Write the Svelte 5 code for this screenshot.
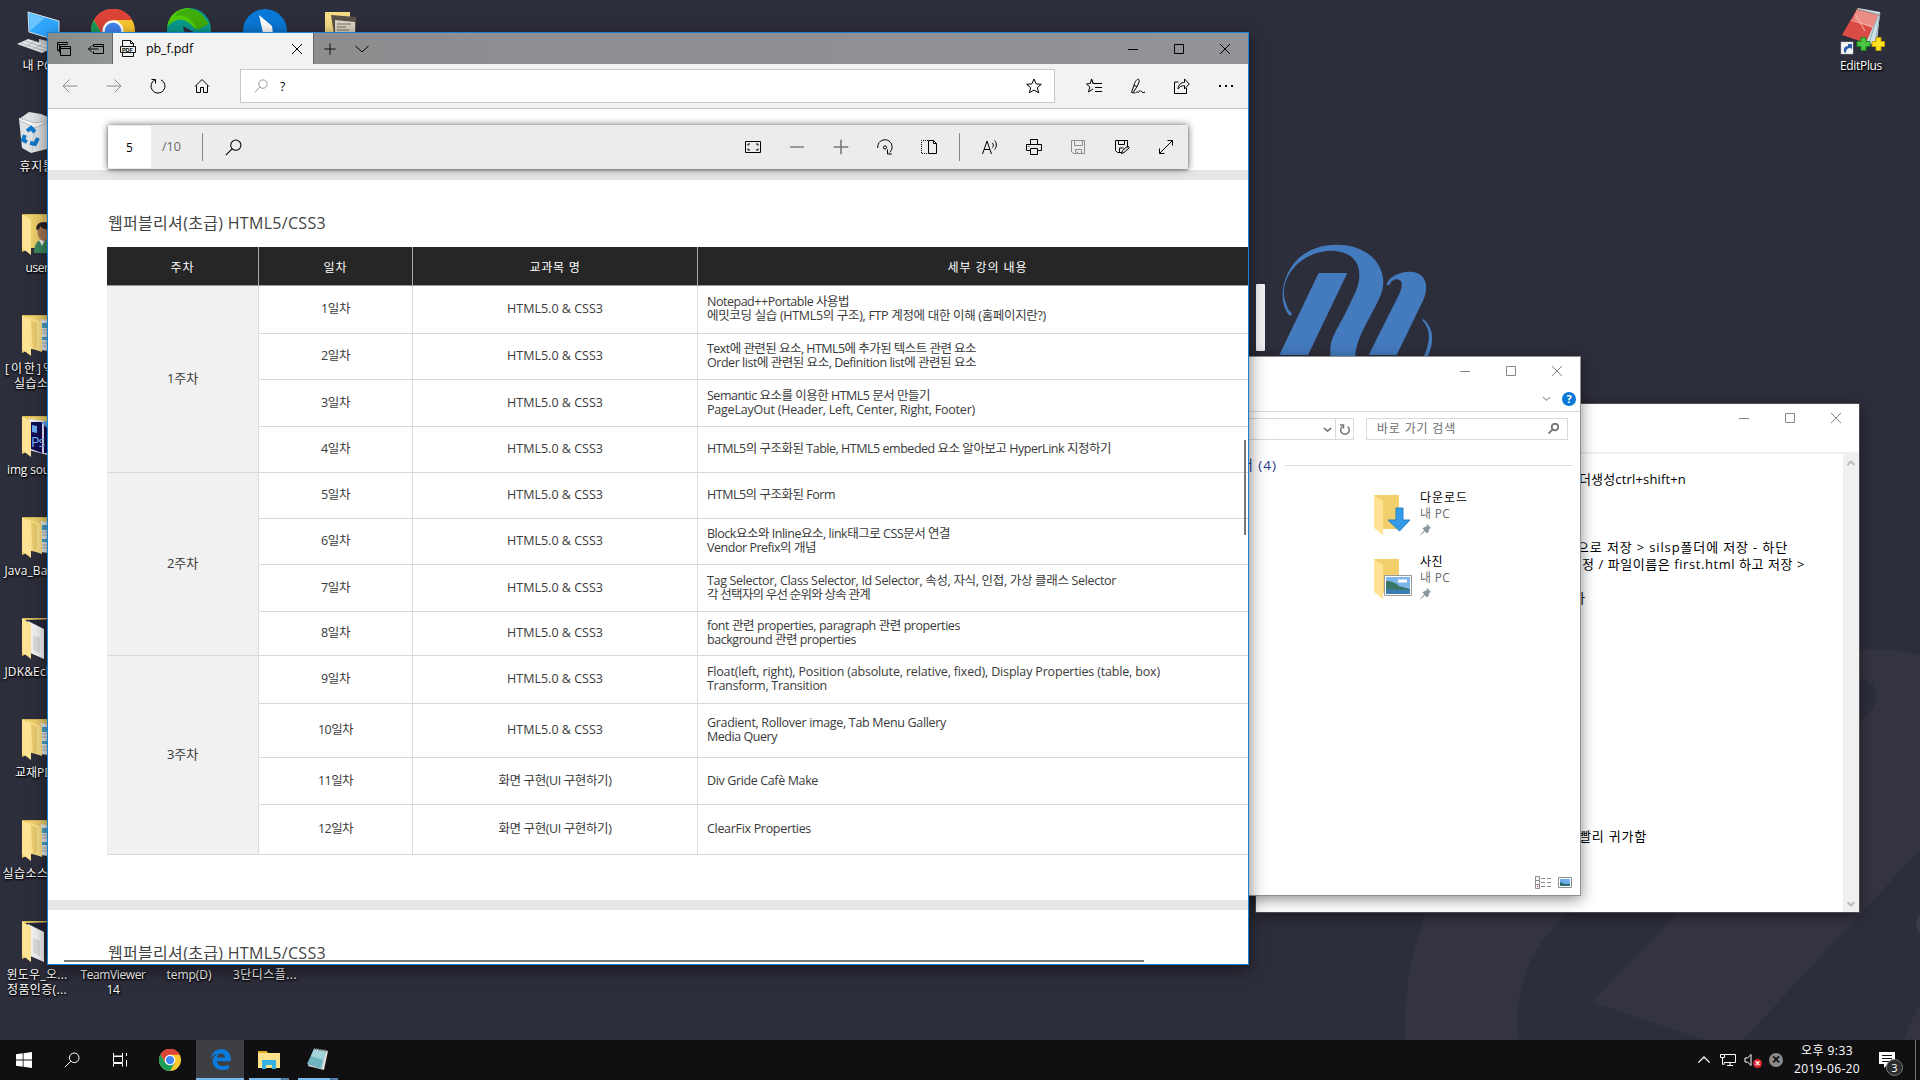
<script lang="ts">
  // Spreads a run of text over a fixed advance width by adjusting its tracking.
  function fit(node: HTMLElement, width: number) {
    const count = [...(node.textContent ?? '')].length;
    const natural = node.getBoundingClientRect().width;
    if (width && count) node.style.letterSpacing = `${(width - natural) / count}px`;
  }

  const glyphs: Record<string, string> = {
    tabs: 'M1.5 9.5v-8h10v1M1.5 3.5h10M3.5 11.5v-8M4.5 5.5h10v9h-10zM4.5 7.5h10M1.5 9.5h2',
    setAside: 'M5.5 5.5v-2h10v9h-10v-2M5.500 5.500h10M.5 8h10M4 4.500L.5 8 4 11.500',
    close: 'M3 3l10 10M13 3L3 13',
    plus: 'M8 1.500v13M1.500 8h13',
    minus: 'M1 8h14',
    chevron: 'M1.500 5L8 11l6.500-6',
    min: 'M3 8.500h10',
    max: 'M3.500 3.500h9v9h-9z',
    back: 'M1 8h14.500M7.500 1.500L1 8l6.500 6.500',
    forward: 'M.5 8H15M8.500 1.500L15 8l-6.500 6.500',
    refresh: 'M5 1.800A7 7 0 1 0 11 1.800M1.500 1.500h4v4',
    home: 'M1 8.500L8 1.500l7 7M2.500 7.500v7h4v-5h3v5h4v-7',
    search: 'M15 5.800a4.800 4.800 0 1 1-9.600 0 4.800 4.800 0 0 1 9.600 0M6.700 9.300L.8 15.200',
    star: 'M8 1l2.100 4.900 5.200.4-4 3.400 1.300 5.100L8 12l-4.600 2.800 1.300-5.100-4-3.400 5.200-.4z',
    favorites: 'M9 5.500L7 5.300 5.500 1 4.300 5.500.5 6l3.300 3-1.300 5L7 11M7.800 5.500H16M9 9.500h7M9 13.500h7M5.500 1L7 5.500',
    pen: 'M5 15l-3.500-.5L4 7C5 3.500 7 .8 8.500 1.300s.5 3.700-1.500 7.200L3.500 14M4 7.500l3 1M8 15c1.500-3 3-2.500 3.500-1.500s2 1.500 3.500.5M5.500 14.800l2-1.300',
    share: 'M4.500 4h-4v11.500h12V10M4 11c.5-4.500 3-6.500 6.500-6.500V1L15.300 6l-4.800 5V7.700C7.500 7.700 5.500 8.500 4 11z',
    fitPage: 'M.5 2.500h15v11H.5zM3 6.500V5h2M11 5h2v1.500M3 9.500V11h2M11 11h2V9.500',
    rotate: 'M.8 9A7.200 7.200 0 1 1 12.500 13.500M10.500 10.500v4.500h4.500M9.600 8.500a1.600 1.600 0 1 1-3.200 0 1.600 1.600 0 0 1 3.200 0',
    read: 'M.5 15L5 2l4.500 13M2 10.500h6M10.500 4c1 1.500 1 3 0 4.500M12.700 1.500c2.200 2.800 2.200 6 0 9',
    print: 'M4.500 5.500v-5h7v5M4.500 11.500h-4v-6h15v6h-4M4.500 9.500h7v6h-7zM2.500 7.500h1',
    save: 'M1.500 1.500h13v13h-11l-2-2zM4.500 1.500v5h8v-5M5.500 14.500v-4h6v4M7.500 14.500v-2',
    savePen: 'M8 13.500H3.500l-2-2v-10h12v7M4.500 1.500v4h6v-4M5.500 13v-4h4M7.500 14.500l1-3 5.500-4.500 1.300 1.800-5.300 4.700z',
    expand: 'M1.500 14.500l13-13M9.500 1.500h5v5M1.500 9.500v5h5',
    up: 'M1.500 11L8 4.500l6.500 6.500',
    taskView: 'M1.500 1v3h9V1M1.500 14.500v-3h9v3M1.500 4.500h9v6h-9zM14.500 1v3M14.500 8v6.500',
    monitor: 'M4.500 2.500h11v8H4M7 13.500h6M10 11v2.500M.5 2.500h4v3h-4zM2.500 6v6.500M2 12h3',
    speaker: 'M1 6h2.500L7 2.500v11L3.500 10H1z',
  };

  const schedule = [
    ['1일차', 0, [['Notepad++Portable 사용법', 142], ['에밋코딩 실습 (HTML5의 구조), FTP 계정에 대한 이해 (홈페이지란?)', 339]], 48],
    ['2일차', 0, [['Text에 관련된 요소, HTML5에 추가된 텍스트 관련 요소', 269], ['Order list에 관련된 요소, Definition list에 관련된 요소', 269]], 46],
    ['3일차', 0, [['Semantic 요소를 이용한 HTML5 문서 만들기', 223], ['PageLayOut (Header, Left, Center, Right, Footer)', 268]], 47],
    ['4일차', 0, [['HTML5의 구조화된 Table, HTML5 embeded 요소 알아보고 HyperLink 지정하기', 404]], 46],
    ['5일차', 0, [['HTML5의 구조화된 Form', 128]], 46],
    ['6일차', 0, [['Block요소와 Inline요소, link태그로 CSS문서 연결', 243], ['Vendor Prefix의 개념', 109]], 46],
    ['7일차', 0, [['Tag Selector, Class Selector, Id Selector, 속성, 자식, 인접, 가상 클래스 Selector', 409], ['각 선택자의 우선 순위와 상속 관계', 163]], 47],
    ['8일차', 0, [['font 관련 properties, paragraph 관련 properties', 253], ['background 관련 properties', 149]], 44],
    ['9일차', 0, [['Float(left, right), Position (absolute, relative, fixed), Display Properties (table, box)', 453], ['Transform, Transition', 120]], 48],
    ['10일차', 0, [['Gradient, Rollover image, Tab Menu Gallery', 239], ['Media Query', 70]], 54],
    ['11일차', 1, [['Div Gride Cafè Make', 111]], 47],
    ['12일차', 1, [['ClearFix Properties', 104]], 50],
  ] as [string, number, [string, number][], number][];
  const subjects: [string, number][] = [['HTML5.0 & CSS3', 96], ['화면 구현(UI 구현하기)', 113]];
  const rowTemplate = ['39px', ...schedule.map((r) => r[3] + 'px')].join(' ');
  const weeks = [['1주차', 2, 4], ['2주차', 6, 4], ['3주차', 10, 4]] as [string, number, number][];
  const headers: [string, number][] = [['주차', 24], ['일차', 24], ['교과목 명', 51], ['세부 강의 내용', 80]];

  const desktop: { col: number; row: number; icon: string; label: [string, number][] }[] = [
    { col: 1, row: 1, icon: 'pc', label: [['내 PC', 29]] },
    { col: 1, row: 2, icon: 'bin', label: [['휴지통', 35]] },
    { col: 1, row: 3, icon: 'user', label: [['user', 23]] },
    { col: 1, row: 4, icon: 'docs', label: [['[이한]엑셀', 64], ['실습소스', 46]] },
    { col: 1, row: 5, icon: 'ps', label: [['img source', 60]] },
    { col: 1, row: 6, icon: 'docs', label: [['Java_Back...', 65]] },
    { col: 1, row: 7, icon: 'white', label: [['JDK&Eclip...', 65]] },
    { col: 1, row: 8, icon: 'docs', label: [['교재PDF', 44]] },
    { col: 1, row: 9, icon: 'docs', label: [['실습소스코드', 69]] },
    { col: 1, row: 10, icon: 'white', label: [['윈도우_오...', 61], ['정품인증(...', 60]] },
    { col: 2, row: 1, icon: 'chrome', label: [] },
    { col: 3, row: 1, icon: 'green', label: [] },
    { col: 4, row: 1, icon: 'blue', label: [] },
    { col: 5, row: 1, icon: 'book', label: [] },
    { col: 2, row: 10, icon: '', label: [['TeamViewer', 65], ['14', 13]] },
    { col: 3, row: 10, icon: '', label: [['temp(D)', 45]] },
    { col: 4, row: 10, icon: '', label: [['3단디스플...', 64]] },
  ];

  // Notes are laid out on a 17px line pitch; the indent is the start of each run.
  const notes: [number, number, string, number][] = [
    [2, 19, '더생성ctrl+shift+n', 107],
    [6, 17, '으로 저장 > silsp폴더에 저장 - 하단', 211],
    [7, 22, '정 / 파일이름은 first.html 하고 저장 >', 223],
    [9, 13, '다', 12],
    [23, 19, '빨리 귀가함', 68],
  ];
</script>

{#snippet glyph(name: string, size = 16, cls = '')}
  <svg class="glyph {cls}" width={size} height={size} viewBox="0 0 16 16"><path d={glyphs[name]} /></svg>
{/snippet}

{#snippet chrome(size: number)}
  <svg width={size} height={size} viewBox="0 0 24 24">
    <circle cx="12" cy="12" r="12" fill="#fbc82f" />
    <path d="M12 12L1.600 6A12 12 0 0 1 22.400 6L12 6z" fill="#dc4437" />
    <path d="M12 6h10.500A12 12 0 0 0 1.600 6L6.800 15z" fill="#dc4437" />
    <path d="M1.600 6A12 12 0 0 0 12 24l5.200-9H6.800z" fill="#1b9e5a" />
    <circle cx="12" cy="12" r="5.800" fill="#fff" /><circle cx="12" cy="12" r="4.500" fill="#4285f4" />
  </svg>
{/snippet}

{#snippet folder(kind: string)}
  <svg width="48" height="48" viewBox="0 0 48 48">
    <path d="M9 6h26v34H18L9 44z" fill="#efcf6c" />
    {#if kind === 'user'}
      <path d="M21 45q0-13 10-14 9 1 9 14z" fill="#3b8860" /><path d="M26 32l3 6 3-6z" fill="#eee" />
      <ellipse cx="31" cy="24" rx="6.500" ry="9" fill="#a97754" />
      <path d="M23.500 22q-1-8 7.500-8 8 0 8 8-9 0-12-4 0 4-3.500 4" fill="#2b2525" />
    {:else if kind === 'docs'}
      <path d="M28 10l14 3v30l-14-2z" fill="#e9eef0" />
      <path d="M29 14h8v5h-8zM29 28h8v3h-8z" fill="#4da5cc" /><path d="M29 21h9M29 24h9M29 34h9M29 37h9" stroke="#a6b6bd" />
      <path d="M14 8l15 5v30l-3-1-12-4z" fill="#fbe08a" /><path d="M18 11l6 3v24l-4 3z" fill="#eacb6c" />
    {:else if kind === 'ps'}
      <path d="M16 9l22 3v34l-22-6z" fill="#eef" /><path d="M18 12h11v31l-11-4zM31 12h10v31H31z" fill="#100c54" />
      <path d="M19 15l5 1v7l-5-1zM28 12l6 6v-7z" fill="#67aaf0" />
      <text x="18" y="37" class="ps">Ps</text>
    {:else if kind === 'white'}
      <path d="M12 8l30-1v34H30z" fill="#25253a" /><path d="M15 9l16 8v30l-16-7z" fill="#f3f3f3" />
      <path d="M20 23l7 3v15l-7-3z" fill="#dcdcdc" />
    {/if}
    <path d="M9 6l9 6v35l-9-7z" fill="#ffe495" />
    <path d="M9 6.500h26" stroke="#d8b95a" />
  </svg>
{/snippet}

{#snippet desktopIcon(kind: string)}
  {#if kind === 'pc'}
    <svg width="48" height="48" viewBox="0 0 48 48">
      <path d="M15 6l31 9v20l-30-9z" fill="#2fa8ff" stroke="#dfe9ef" stroke-width="1" /><path d="M16 7l16 5-15 13z" fill="#6ac4ff" />
      <path d="M26 33l12 3v7l-12-4z" fill="#ccc" /><path d="M4 38l11-5 26 8-12 6z" fill="#e3e6e8" /><path d="M8 37l24 8M12 35l24 8M12 41l10-6M20 43l10-5" stroke="#9fa6aa" stroke-width=".7" />
    </svg>
  {:else if kind === 'bin'}
    <svg width="48" height="48" viewBox="0 0 48 48">
      <path d="M6 12l10-7 12 2 12 5-6 30-16 4-9-5z" fill="#dfe3e6" /><path d="M6 11l16 5 18-3-18 8-16-8" fill="#f8f8f8" stroke="#a9b0b5" stroke-width=".8" /><path d="M22 19l-3 25" stroke="#c0c7cb" />
      <path d="M14 24l4-3 4 4M12 28l-2 5 4 2M17 36l5 1 3-6" fill="none" stroke="#1478c9" stroke-width="4" />
    </svg>
  {:else if kind === 'chrome'}
    <span class="round">{@render chrome(44)}</span>
  {:else if kind === 'green'}
    <svg width="48" height="48" viewBox="0 0 48 48"><circle cx="24" cy="24" r="22" fill="#099c8d" /><path d="M2 21Q5 3 24 2l20 15-14 6Q16 5 2 21z" fill="#51ca06" /><path d="M10 10q14-3 23 14l10-6Q36 2 22 3q-8 1-12 7z" fill="#3fae0a" /><path d="M18 20l14 8-10 9z" fill="#2d2e3b" /></svg>
  {:else if kind === 'blue'}
    <svg width="48" height="48" viewBox="0 0 48 48"><circle cx="24" cy="25" r="22" fill="#0a78d6" /><path d="M18 9l13 11 1 8 8 5-27-4 9-2z" fill="#fff" /></svg>
  {:else if kind === 'book'}
    <svg width="48" height="48" viewBox="0 0 48 48"><path d="M8 6h25v30H8z" fill="#f5dc86" /><path d="M14 9l25 2v30H19z" fill="#5a5248" /><path d="M18 14l20 2v25H18z" fill="#dcd5c5" /><path d="M20 18h14M20 21h9M20 24h12" stroke="#7b7469" /></svg>
  {:else if kind}
    {@render folder(kind)}
  {:else}
    <span class="noicon"></span>
  {/if}
{/snippet}

{#snippet captions()}
  <div class="captions">
    <span>{@render glyph('min')}</span><span>{@render glyph('max')}</span><span>{@render glyph('close')}</span>
  </div>
{/snippet}

{#snippet pin()}
  <svg class="pin" width="12" height="12" viewBox="0 0 12 12"><path d="M7 0l4 4-1.500.5L8.500 8 7 9.500 4.800 7.300.5 11.500 0 11l4.200-4.800L2.500 4.500 4 3.200l2.500-.7z" fill="#8c979e" /></svg>
{/snippet}

<div class="desktop">
  <svg class="wallpaper" width="1920" height="1040" viewBox="0 0 1920 1040">
    <path d="M1860 650Q1890 648 1920 655V850L1743 1040H1704L1592 1002 1680 910 1860 800V722Q1884 702 1873 685 1868 679 1860 678z" fill="#333440" />
    <path d="M1568 913Q1510 965 1518 1040H1405Q1403 970 1426 913z" fill="#333440" />
    <path d="M1920 1003L1903 1040H1920z" fill="#333440" />
    <path d="M1917 921q-2 8 3 13v-20z" fill="#3c3d49" />
    <rect x="1256" y="284" width="9" height="67" rx="1" fill="#f4f4f6" />
    <g transform="translate(1240 220) scale(.3333)" fill="#447bbf">
      <path d="M150 288C100 240 130 75 290 74C380 74 432 130 430 190C430 245 345 340 346 412L272 412C265 350 290 340 335 240C370 180 375 100 280 92C180 90 110 180 138 250Q144 274 157 281Z" />
      <path d="M236 159H322L204 405H118z" />
      <path d="M440 195C446 165 490 154 510 155C560 157 568 200 550 240L470 405H386L478 222C492 192 485 178 470 178C455 180 450 190 448 196Z" />
      <path d="M548 296C585 325 582 370 562 412H550C570 370 575 330 548 302z" />
    </g>
  </svg>

  <div class="icons">
    {#each desktop as item}
      <div class="cell" style:grid-column={item.col} style:grid-row={item.row}>
        {@render desktopIcon(item.icon)}
        <div class="label">
          {#each item.label as [text, w]}<span use:fit={w}>{text}</span>{/each}
        </div>
      </div>
    {/each}
  </div>

  <div class="editplus">
    <svg width="48" height="50" viewBox="0 0 48 50">
      <path d="M21 3l22 4-3 30-12 4z" fill="#cfe2ea" /><path d="M43 8l-5 31M41 10L32 38" stroke="#8fa9b5" />
      <path d="M20 4l21 6-12 28L5 30z" fill="#dc4c46" /><path d="M20 4l21 6-6 13-19-9z" fill="#ec8d84" /><path d="M14 15l22 7M18 9l10 17" stroke="#f6b8ae" stroke-width="1" /><path d="M20 4l22 6" stroke="#8f7f7f" stroke-width="2" stroke-dasharray="1 1" />
      <rect x="4" y="37" width="12" height="12" fill="#f4f4f4" stroke="#bbb" stroke-width=".5" /><path d="M7 47q-1-6 4-6v-2h4v5l-2-1q-4 0-4 5z" fill="#2a5da8" />
      <path d="M24 32.500h5v4h4v5h-4v4h-5v-4h-4v-5h4z" fill="#4fc443" stroke="#148a1a" /><path d="M39 32.500h5v4h3.500v5H44v4h-5v-4h-4v-5h4z" fill="#ffe11f" stroke="#c79a08" />
    </svg>
    <div class="label"><span use:fit={42}>EditPlus</span></div>
  </div>

  <section class="window notepad">
    <header>{@render captions()}</header>
    <div class="notebody">
      <div class="notetext">
        {#each notes as [line, x, text, w]}
          <p style:grid-row={line} style:margin-left="{x}px"><span use:fit={w}>{text}</span></p>
        {/each}
      </div>
      <div class="scroll">
        <svg width="8" height="6" viewBox="0 0 8 6"><path d="M.5 5L4 1.500 7.500 5" /></svg>
        <svg width="8" height="6" viewBox="0 0 8 6"><path d="M.5 1L4 4.500 7.500 1" /></svg>
      </div>
    </div>
  </section>

  <section class="window explorer">
    <header>{@render captions()}</header>
    <div class="ribbon">
      {@render glyph('chevron', 9, 'thick')}
      <span class="help">?</span>
    </div>
    <div class="pathrow">
      <div class="path"><span>{@render glyph('chevron', 9, 'heavy')}</span><span class="reload"><svg width="12" height="13" viewBox="0 0 12 13"><path d="M3.500 3.500A4.300 4.300 0 1 0 8.500 3.500M1 2h3.500v3.500" /></svg></span></div>
      <div class="find"><span use:fit={79}>바로 가기 검색</span>{@render glyph('search', 11, 'heavy')}</div>
    </div>
    <div class="group"><span use:fit={50}>폴더 (4)</span><i></i></div>
    <div class="places">
      <div class="place">
        <svg width="40" height="44" viewBox="0 0 40 44"><path d="M0 2h25v34H8z" fill="#f1cf6b" /><path d="M0 2l9 6v34l-9-7z" fill="#ffe294" /><path d="M22 15h7v12h7L25.500 38 14 27h8z" fill="#359be8" stroke="#2480ca" /></svg>
        <div><b use:fit={48}>다운로드</b><span use:fit={30}>내 PC</span>{@render pin()}</div>
      </div>
      <div class="place">
        <svg width="40" height="44" viewBox="0 0 40 44"><path d="M0 2h25v34H8z" fill="#f1cf6b" /><path d="M0 2l9 6v34l-9-7z" fill="#ffe294" /><path d="M10.500 18.500h27v20h-27z" fill="#fff" stroke="#9a9a9a" /><path d="M12 20h24v17H12z" fill="#7eb5ec" /><path d="M12 24q8 0 13 5l11 3v5H12z" fill="#397764" /><path d="M12 32l24 1v4H12z" fill="#3a7dae" /><path d="M24 24h9" stroke="#fff" stroke-width="3" /></svg>
        <div><b use:fit={23}>사진</b><span use:fit={30}>내 PC</span>{@render pin()}</div>
      </div>
    </div>
    <footer>
      <svg width="17" height="14" viewBox="0 0 17 14"><path d="M.5.500h4v12h-4zM.5 4.500h4M.5 8.500h4M6 2.500h4M12 2.500h4M6 6.500h4M12 6.500h4M6 10.500h4M12 10.500h4" fill="none" stroke="#8b8b8b" /><path d="M2 10h1v1H2z" fill="#c22" /></svg>
      <svg width="14" height="12" viewBox="0 0 14 12"><path d="M.5.500h13v10H.5z" fill="#fff" stroke="#8f8f8f" /><path d="M2 2h10v7H2z" fill="#6eaef0" /><path d="M2 5l5 2h5v2H2z" fill="#2e6f6d" /></svg>
    </footer>
  </section>

  <section class="window edge">
    <div class="tabbar">
      <div class="aside"><span>{@render glyph('tabs')}</span><span>{@render glyph('setAside')}</span></div>
      <div class="tab">
        <svg width="16" height="17" viewBox="0 0 16 17"><path d="M2.500 6V.500h8l3 3V6M10.500.500v3h3M2.500 12.500v4h11v-4M.5 6.500h15v6H.5z" fill="none" stroke="#111" /><text x="1.900" y="11.600">PDF</text></svg>
        <span class="tabname" use:fit={47}>pb_f.pdf</span>
        {@render glyph('close')}
      </div>
      <span class="new">{@render glyph('plus')}</span>
      <span class="more">{@render glyph('chevron')}</span>
      {@render captions()}
    </div>
    <div class="toolbar">
      <span class="btn dim">{@render glyph('back')}</span><span class="btn dim">{@render glyph('forward')}</span><span class="btn">{@render glyph('refresh')}</span><span class="btn">{@render glyph('home')}</span>
      <div class="address"><span class="btn lens">{@render glyph('search', 14)}</span><span class="query">?</span><span class="btn">{@render glyph('star')}</span></div>
      <span class="btn">{@render glyph('favorites')}</span><span class="btn">{@render glyph('pen')}</span><span class="btn">{@render glyph('share')}</span>
      <span class="btn"><svg width="16" height="16" viewBox="0 0 16 16"><path d="M1 7h2v2H1zM7 7h2v2H7zM13 7h2v2h-2z" /></svg></span>
    </div>
    <div class="document">
      <div class="gap"></div>
      <article class="page">
        <h1><span use:fit={218}>웹퍼블리셔(초급) HTML5/CSS3</span></h1>
        <div class="table" style:grid-template-rows={rowTemplate}>
          {#each headers as [text, w]}<div class="th"><span use:fit={w}>{text}</span></div>{/each}
          {#each weeks as [text, row, span]}
            <div class="week" style:grid-row="{row} / span {span}"><span use:fit={31}>{text}</span></div>
          {/each}
          {#each schedule as [day, subject, lines], i}
            <div class="td day" style:grid-row={i + 2}><span use:fit={i > 8 ? 35 : 29}>{day}</span></div>
            <div class="td subject" style:grid-row={i + 2}><span use:fit={subjects[subject][1]}>{subjects[subject][0]}</span></div>
            <div class="td detail" style:grid-row={i + 2}>
              {#each lines as [text, w]}<span use:fit={w}>{text}</span>{/each}
            </div>
          {/each}
        </div>
      </article>
      <div class="gap"></div>
      <article class="page next"><h1><span use:fit={218}>웹퍼블리셔(초급) HTML5/CSS3</span></h1></article>

      <div class="pdfbar">
        <span class="current">5</span><span class="total">/10</span><i></i>
        <span class="btn find-text">{@render glyph('search', 17)}</span>
        <span class="spacer"></span>
        <span class="btn">{@render glyph('fitPage')}</span><span class="btn gray">{@render glyph('minus')}</span><span class="btn gray">{@render glyph('plus', 18)}</span><span class="btn">{@render glyph('rotate')}</span>
        <span class="btn"><svg class="glyph" width="16" height="16" viewBox="0 0 16 16"><path d="M7.500 1.500h5l3 3v10h-8zM12.500 1.500v3h3" /><path d="M7 1.500H.5v13H7" stroke-dasharray="1 1" /></svg></span>
        <i class="sep"></i>
        <span class="btn">{@render glyph('read')}</span><span class="btn">{@render glyph('print')}</span><span class="btn dim">{@render glyph('save')}</span><span class="btn">{@render glyph('savePen')}</span><span class="btn">{@render glyph('expand')}</span>
      </div>
      <div class="vthumb"></div>
      <div class="hthumb"></div>
    </div>
  </section>

  <footer class="taskbar">
    <span class="task"><svg width="16" height="16" viewBox="0 0 16 16"><path d="M0 2.300L6.700 1.300V7.600H0zM7.500 1.200L16 0v7.600H7.500zM0 8.400h6.700v6.300L0 13.700zM7.500 8.400H16V16l-8.500-1.200z" fill="#fff" /></svg></span>
    <span class="task">{@render glyph('search')}</span>
    <span class="task">{@render glyph('taskView')}</span>
    <span class="task app">{@render chrome(22)}</span>
    <span class="task active"><svg width="21" height="21" viewBox="0 0 24 24"><path d="M1 11C2 4 7 0 13 0c6.500 0 10.500 5 10.500 10.500V14H8c.3 4 3 5.500 7 5.500 2.500 0 4.500-.6 6.500-1.700v4.700C19.500 23.600 17 24 14.500 24 7.500 24 3 20 3 14c0-4 2.500-7.200 6-8.700C5 5.500 2.500 8 1 11zM8.200 9.800h9C17.200 7 15.500 5 12.700 5 10 5 8.500 7 8.200 9.800z" fill="#0b7bdd" /></svg></span>
    <span class="task group-a"><svg width="22" height="19" viewBox="0 0 22 19"><path d="M0 1h8l2 2h12v15H0z" fill="#ffe28c" /><path d="M0 1h8l2 2H0z" fill="#e5ac2b" /><path d="M4 10h14v9h-4v-4H8v4H4z" fill="#35b3e5" /></svg></span>
    <span class="task group-b"><svg width="24" height="24" viewBox="0 0 24 24"><path d="M8 2l14 2-4 19-16-4z" fill="#ddd" /><path d="M8 2l12 2-5 18L1 17z" fill="#6fb6c2" /><path d="M8 2l12 2-3 9-12-4z" fill="#a3d3da" /><path d="M8 2l13 2" stroke="#888" stroke-width="2" stroke-dasharray="1 1" /></svg></span>
    <div class="tray">
      <span>{@render glyph('up', 14, 'strong')}</span><span>{@render glyph('monitor')}</span>
      <span class="mute">{@render glyph('speaker')}<i>×</i></span>
      <span><b class="off">×</b></span>
      <div class="clock"><span use:fit={52}>오후 9:33</span><span use:fit={66}>2019-06-20</span></div>
      <span class="action"><svg width="16" height="16" viewBox="0 0 16 16"><path d="M0 0h16v12H9l-4 4v-4H0z" fill="#fff" /><path d="M3 3.500h10M3 6.500h10M3 9.500h7" stroke="#111" /></svg><i>3</i></span>
      <span class="peek"></span>
    </div>
  </footer>
</div>

<style>
  :global(body) { margin: 0; overflow: hidden; }
  * { box-sizing: border-box; }
  .desktop { position: relative; width: 1920px; height: 1080px; overflow: hidden; background: #2d2e3b; color: #000; font: 12px/15px "Open Sans", "Noto Sans CJK KR", sans-serif; }
  .desktop span, .desktop b { white-space: nowrap; }
  svg { display: block; flex: none; }
  .glyph { fill: none; stroke: currentColor; stroke-width: 1; }
  .glyph.thick { stroke-width: 2; color: #999; }
  .glyph.heavy { stroke-width: 2.800; color: #777; }
  .glyph.strong { stroke-width: 1.500; }
  .wallpaper { position: absolute; inset: 0; }
  .ps { font: 14px "Open Sans", sans-serif; fill: #80baff; letter-spacing: -1px; }

  .icons { position: absolute; inset: 0 auto auto 0; display: grid; grid-template-columns: repeat(5, 76px); grid-template-rows: repeat(10, 101px); }
  .cell { display: flex; flex-direction: column; align-items: center; padding: 6px 2px 0 0; gap: 4px; }
  .noicon { width: 48px; height: 48px; }
  .round { padding: 3px 2px 1px; }
  .label { display: flex; flex-direction: column; align-items: center; color: #fff; text-shadow: 1px 1px 2px #000, 0 1px 2px #000; }
  .editplus { position: absolute; left: 1832px; top: 5px; width: 58px; display: flex; flex-direction: column; align-items: center; gap: 3px; }

  .window { position: absolute; display: flex; flex-direction: column; background: #fff; }
  .captions { display: flex; margin-left: auto; }
  .captions span { width: 46px; display: flex; justify-content: center; align-items: center; }
  .window > header { display: flex; height: 28px; color: #888; }

  .notepad { left: 1255px; top: 403px; width: 605px; height: 510px; border: 1px solid #4b4c55; box-shadow: 0 3px 12px #0007; }
  .notebody { flex: 1; display: flex; margin-top: 20px; border-top: 2px solid #f0f0f0; }
  .notetext { flex: 1; padding: 0 0 0 304px; display: grid; grid-template-rows: repeat(26, 17px); grid-template-columns: 1fr; align-content: start; }
  .notetext p { margin: 0; font-size: 13px; line-height: 17px; }
  .scroll { width: 16px; background: #f0f0f0; display: flex; flex-direction: column; justify-content: space-between; align-items: center; padding: 6px 0 5px; }
  .scroll svg { fill: none; stroke: #bcbcbc; stroke-width: 2; }

  .explorer { left: 1000px; top: 356px; width: 581px; height: 540px; border: 1px solid #8f9093; box-shadow: 0 3px 14px #0007; }
  .ribbon { height: 27px; display: flex; justify-content: flex-end; align-items: center; gap: 11px; padding: 1px 4px 0 0; border-bottom: 1px solid #dadada; }
  .help { width: 14px; height: 14px; border-radius: 7px; background: #0a78d6; color: #fff; font-size: 11px; font-weight: 700; line-height: 14px; text-align: center; }
  .pathrow { display: flex; gap: 12px; padding: 6px 12px 0 0; height: 28px; margin-bottom: 16px; }
  .path { flex: 1; border: 1px solid #d9d9d9; display: flex; justify-content: flex-end; align-items: stretch; }
  .path span { display: flex; align-items: center; padding-right: 3px; }
  .path .reload { width: 18px; border-left: 1px solid #d9d9d9; padding-left: 3px; }
  .path .reload path { fill: none; stroke: #777; stroke-width: 1.500; }
  .find { width: 202px; border: 1px solid #d9d9d9; padding: 0 8px 2px 10px; display: flex; justify-content: space-between; align-items: center; color: #6d6d6d; }
  .group { display: flex; align-items: center; gap: 8px; padding: 0 7px 0 226px; height: 18px; font-size: 13.500px; color: #1e3a8f; }
  .group i { flex: 1; height: 1px; background: #dedede; }
  .places { display: flex; flex-direction: column; gap: 12px; padding: 15px 0 0 373px; }
  .place { display: flex; gap: 6px; height: 52px; }
  .place svg { margin-top: 4px; }
  .place div { display: flex; flex-direction: column; align-items: flex-start; line-height: 16px; padding-top: 1px; }
  .place b { font-weight: 400; }
  .place span { color: #6d6d6d; }
  .place .pin { margin-top: 2px; }
  .explorer footer { margin-top: auto; display: flex; justify-content: flex-end; align-items: center; gap: 6px; padding: 0 8px 5px 0; }

  .edge { left: 47px; top: 32px; width: 1202px; height: 933px; border: 1px solid #1883d7; box-shadow: 0 4px 16px #0008; }
  .tabbar { height: 31px; display: flex; background: linear-gradient(90deg, #868b8a, #929794 5%, #8d8c8f 24%, #929398); }
  .aside { width: 65px; display: flex; border-right: 1px solid #666; }
  .aside span, .new, .more { width: 32px; display: flex; align-items: center; justify-content: center; }
  .tab { width: 200px; background: #f2f2f2; display: flex; align-items: center; padding: 0 8px 0 7px; }
  .tab text { font: 700 5.500px "Liberation Sans", sans-serif; }
  .tabname { margin: 0 auto 0 10px; font-size: 12.500px; }
  .new { border-left: 1px solid #666; width: 33px; }
  .new .glyph { width: 14px; }
  .toolbar { height: 45px; background: #f2f2f2; border-bottom: 1px solid #c8c8c8; display: flex; align-items: center; }
  .btn { width: 44px; display: flex; align-items: center; justify-content: center; }
  .dim { color: #8c8c8c; }
  .lens { width: 40px; color: #8c8c8c; }
  .gray { color: #777; }
  .gray .glyph { stroke-width: 1.400; }
  .address { width: 816px; height: 34px; margin: 0 17px 0 16px; border: 1px solid #c8c8c8; background: #fff; display: flex; align-items: center; }
  .address .query { margin: 0 auto 0 -1px; font-size: 12px; }
  .address .btn:last-child { width: 42px; padding-left: 2px; }

  .document { position: relative; flex: 1; overflow: hidden; padding-top: 61px; display: flex; flex-direction: column; }
  .gap { height: 10px; flex: none; background: #e5e5e5; }
  .page { flex: none; height: 720px; padding: 31px 0 0 59px; overflow: hidden; color: #3a3a3a; }
  .page h1 { margin: 0 0 12px 1px; font-size: 16px; line-height: 24px; font-weight: 400; height: 24px; color: #444; }
  .table { display: grid; grid-template-columns: 152px 154px 285px 580px; width: 1171px; }
  .th, .td, .week { display: flex; align-items: center; justify-content: center; border-right: 1px solid #dcdcdc; border-bottom: 1px solid #d8d8d8; }
  .th { background: #262626; color: #fff; border-bottom-color: #999; border-right-color: #aaa; padding-top: 2px; }
  .week { grid-column: 1; background: #f1f1f1; font-size: 13px; padding-bottom: 2px; }
  .td { font-size: 12.500px; line-height: 14px; padding-bottom: 1px; }
  .day { grid-column: 2; }
  .subject { grid-column: 3; }
  .detail { grid-column: 4; flex-direction: column; align-items: flex-start; padding-left: 9px; }

  .pdfbar { position: absolute; left: 60px; top: 16px; width: 1080px; height: 44px; background: #ececec; box-shadow: 0 0 7px #0009, 0 1px 2px #0005; display: flex; align-items: center; }
  .current { width: 43px; height: 42px; line-height: 43px; background: #fff; text-align: center; }
  .total { width: 51px; padding-left: 11px; line-height: 44px; color: #666; font-size: 12.500px; }
  .pdfbar i { width: 1px; height: 28px; background: #888; }
  .find-text { width: 60px; }
  .spacer { flex: 1; }
  .pdfbar .sep { margin: 0 8px; }
  .vthumb { position: absolute; left: 1196px; top: 331px; width: 2px; height: 95px; background: #777; }
  .hthumb { position: absolute; left: 16px; top: 851px; width: 1080px; height: 2px; background: #777; }

  .taskbar { position: absolute; inset: auto 0 0 0; height: 40px; background: #101012; display: flex; color: #fff; }
  .task { width: 48px; display: flex; align-items: center; justify-content: center; }
  .task.app { width: 52px; }
  .task.active { background: #3e3f42; border-bottom: 2px solid #76b9ed; }
  .group-a, .group-b { margin-left: 5px; width: 40px; border-bottom: 2px solid; border-image: linear-gradient(90deg, #76b9ed 31px, #31658f 31px, #5580a4 33px) 2; }
  .group-b { margin-left: 9px; }
  .tray { margin-left: auto; display: flex; align-items: center; }
  .tray > span { width: 24px; display: flex; justify-content: center; align-items: center; position: relative; }
  .mute i { position: absolute; left: 13px; top: 7px; width: 9px; height: 9px; border-radius: 5px; background: #d9252b; font: 700 10px/8px "Open Sans", sans-serif; text-align: center; }
  .off { width: 14px; height: 14px; border-radius: 7px; background: #8b8b8b; color: #111; font-size: 16px; line-height: 13px; text-align: center; }
  .clock { width: 78px; display: flex; flex-direction: column; align-items: center; line-height: 18px; }
  .tray > .action { width: 42px; margin-right: 7px; }
  .action i { position: absolute; left: 20px; top: 7px; width: 17px; height: 17px; border: 1px solid #777; border-radius: 9px; background: #2c2c2e; font: 11px/15px "Open Sans", sans-serif; text-align: center; }
  .tray > .peek { width: 5px; height: 40px; border-left: 1px solid #777; }
</style>
